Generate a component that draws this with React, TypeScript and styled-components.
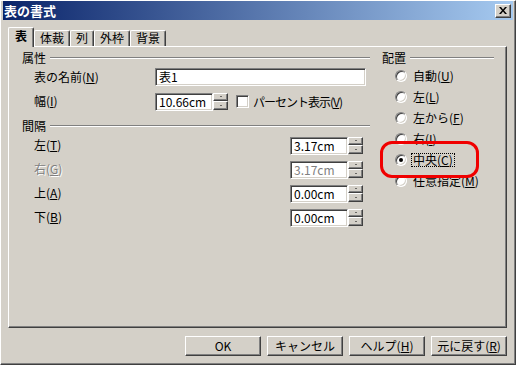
import styled, { createGlobalStyle, css } from "styled-components";

const GlobalStyle = createGlobalStyle`
  html, body {
    margin: 0;
    padding: 0;
    background: #d4d0c8;
  }
  body {
    font-family: "Noto Sans CJK JP", "DejaVu Sans", sans-serif;
    font-size: 12px;
    color: #000;
  }
`;

const raised = css`
  border: 1px solid;
  border-color: #fff #404040 #404040 #fff;
  box-shadow: inset -1px -1px #808080;
`;

const sunken = css`
  border: 1px solid;
  border-color: #808080 #fff #fff #808080;
  box-shadow: inset 1px 1px #404040, inset -1px -1px #d4d0c8;
`;

const Window = styled.div`
  position: relative;
  width: 516px;
  height: 365px;
  box-sizing: border-box;
  background: #d4d0c8;
  border: 1px solid;
  border-color: #fff #404040 #404040 #fff;
  box-shadow: inset -1px -1px #808080;
  padding: 0 2px 2px 2px;
  display: flex;
  flex-direction: column;
`;

const TitleBar = styled.div`
  height: 19px;
  display: flex;
  align-items: center;
  padding: 0 2px 0 1px;
  background: linear-gradient(to right, #0a246a, #a6caf0);
`;

const Title = styled.div`
  color: #fff;
  font-weight: bold;
  font-size: 13px;
  line-height: 15px;
`;

const CloseButton = styled.div`
  ${raised};
  margin-left: auto;
  width: 16px;
  height: 14px;
  box-sizing: border-box;
  background: #d4d0c8;
  display: flex;
  align-items: center;
  justify-content: center;
`;

const Body = styled.div`
  padding: 7px 6px 0 5px;
  display: flex;
  flex-direction: column;
`;

const TabBar = styled.div`
  height: 19px;
  display: flex;
  align-items: flex-end;
  padding-left: 2px;
`;

const Tab = styled.div<{ $active?: boolean }>`
  position: relative;
  box-sizing: border-box;
  height: 16px;
  padding: 0 5px;
  line-height: 14px;
  background: #d4d0c8;
  border-top: 1px solid #fff;
  border-left: 1px solid #fff;
  border-right: 1px solid #404040;
  box-shadow: inset -1px 0 #808080;
  border-radius: 2px 2px 0 0;
  white-space: nowrap;
  ${(p) =>
    p.$active &&
    css`
      z-index: 1;
      height: 20px;
      margin: 0 0 -1px -2px;
      padding: 1px 6px 0 6px;
      font-weight: bold;
    `}
`;

const Panel = styled.div`
  height: 282px;
  box-sizing: border-box;
  border: 1px solid;
  border-color: #fff #404040 #404040 #fff;
  box-shadow: inset -1px -1px #808080;
  padding: 4px 12px 0 13px;
  display: flex;
  gap: 12px;
`;

const Column = styled.div<{ $width: number }>`
  width: ${(p) => p.$width}px;
  display: flex;
  flex-direction: column;
`;

const Heading = styled.div<{ $gap?: number }>`
  height: 14px;
  display: flex;
  align-items: center;
  gap: 4px;
  margin-top: ${(p) => p.$gap ?? 0}px;
  line-height: 14px;
`;

const HeadingLine = styled.div`
  flex: 1;
  border-top: 1px solid #808080;
  border-bottom: 1px solid #fff;
`;

const Row = styled.div`
  height: 24px;
  display: flex;
  align-items: center;
  padding-left: 12px;
`;

const Label = styled.div<{ $width: number; $disabled?: boolean }>`
  width: ${(p) => p.$width}px;
  line-height: 14px;
  white-space: nowrap;
  ${(p) =>
    p.$disabled &&
    css`
      color: #808080;
      text-shadow: 1px 1px #fff;
    `}
`;

const TextField = styled.div<{ $width: number; $disabled?: boolean }>`
  ${sunken};
  box-sizing: border-box;
  width: ${(p) => p.$width}px;
  height: 18px;
  background: #fff;
  padding-left: 3px;
  line-height: 16px;
  color: ${(p) => (p.$disabled ? "#808080" : "#000")};
`;

const Spin = styled.div`
  display: flex;
  height: 17px;
`;

const SpinButtons = styled.div`
  width: 15px;
  display: flex;
  flex-direction: column;
`;

const SpinButton = styled.div<{ $down?: boolean }>`
  ${raised};
  flex: 1;
  box-sizing: border-box;
  background: #d4d0c8;
  display: flex;
  align-items: center;
  justify-content: center;

  &::after {
    content: "";
    width: 0;
    height: 0;
    border-left: 1px solid transparent;
    border-right: 1px solid transparent;
    ${(p) =>
      p.$down
        ? "border-top: 1px solid #000;"
        : "border-bottom: 1px solid #000;"}
  }
`;

const CheckBox = styled.div`
  ${sunken};
  box-sizing: border-box;
  width: 13px;
  height: 13px;
  margin-left: 8px;
  background: #fff;
`;

const CheckText = styled.span`
  margin-left: 4px;
  letter-spacing: -1px;
  white-space: nowrap;
`;

const RadioItem = styled.div`
  height: 21px;
  display: flex;
  align-items: center;
  gap: 5px;
  padding-left: 13px;
`;

const RadioCircle = styled.div<{ $checked?: boolean }>`
  position: relative;
  width: 12px;
  height: 12px;
  box-sizing: border-box;
  border-radius: 50%;
  background: #fff;
  border: 1px solid;
  border-color: #808080 #fff #fff #808080;
  box-shadow: inset 1px 1px #404040, inset -1px -1px #d4d0c8;

  ${(p) =>
    p.$checked &&
    css`
      &::after {
        content: "";
        position: absolute;
        left: 3px;
        top: 3px;
        width: 4px;
        height: 4px;
        border-radius: 50%;
        background: #000;
      }
    `}
`;

const RadioLabel = styled.span<{ $focus?: boolean }>`
  line-height: 12px;
  padding: 0 1px;
  white-space: nowrap;
  outline: ${(p) => (p.$focus ? "1px dotted #000" : "none")};
`;

const ButtonRow = styled.div`
  margin-top: 8px;
  display: flex;
  justify-content: flex-end;
  gap: 6px;
`;

const Button = styled.div`
  ${raised};
  box-sizing: border-box;
  width: 76px;
  height: 20px;
  background: #d4d0c8;
  display: flex;
  align-items: center;
  justify-content: center;
  line-height: 14px;
`;

const Highlight = styled.div`
  position: absolute;
  left: 379px;
  top: 140px;
  width: 99px;
  height: 37px;
  box-sizing: border-box;
  border: 3px solid #f00000;
  border-radius: 12px;
  pointer-events: none;
`;

const SpinField = ({ value, disabled }: { value: string; disabled?: boolean }) => (
  <Spin>
    <TextField $width={58} $disabled={disabled}>
      {value}
    </TextField>
    <SpinButtons>
      <SpinButton />
      <SpinButton $down />
    </SpinButtons>
  </Spin>
);

const spacing = [
  { label: "左", key: "T", value: "3.17cm" },
  { label: "右", key: "G", value: "3.17cm", disabled: true },
  { label: "上", key: "A", value: "0.00cm" },
  { label: "下", key: "B", value: "0.00cm" },
];

const alignments = [
  { label: "自動", key: "U" },
  { label: "左", key: "L" },
  { label: "左から", key: "F" },
  { label: "右", key: "I" },
  { label: "中央", key: "C", checked: true },
  { label: "任意指定", key: "M" },
];

const App = () => {
  return (
    <>
      <GlobalStyle />
      <Window>
        <TitleBar>
          <Title>表の書式</Title>
          <CloseButton>
            <svg width="8" height="7" viewBox="0 0 8 7">
              <path d="M0 0h2l2 2.5L6 0h2L5 3.5 8 7H6L4 4.5 2 7H0l3-3.5z" fill="#000" />
            </svg>
          </CloseButton>
        </TitleBar>

        <Body>
          <TabBar>
            <Tab $active>表</Tab>
            <Tab>体裁</Tab>
            <Tab>列</Tab>
            <Tab>外枠</Tab>
            <Tab>背景</Tab>
          </TabBar>

          <Panel>
            <Column $width={348}>
              <Heading>
                属性
                <HeadingLine />
              </Heading>
              <Row>
                <Label $width={121}>
                  表の名前(<u>N</u>)
                </Label>
                <TextField $width={211}>表1</TextField>
              </Row>
              <Row>
                <Label $width={121}>
                  幅(<u>I</u>)
                </Label>
                <SpinField value="10.66cm" />
                <CheckBox />
                <CheckText>
                  パーセント表示(<u>V</u>)
                </CheckText>
              </Row>

              <Heading $gap={6}>
                間隔
                <HeadingLine />
              </Heading>
              {spacing.map((s) => (
                <Row key={s.key}>
                  <Label $width={256} $disabled={s.disabled}>
                    {s.label}(<u>{s.key}</u>)
                  </Label>
                  <SpinField value={s.value} disabled={s.disabled} />
                </Row>
              ))}
            </Column>

            <Column $width={112}>
              <Heading>
                配置
                <HeadingLine />
              </Heading>
              {alignments.map((a) => (
                <RadioItem key={a.key}>
                  <RadioCircle $checked={a.checked} />
                  <RadioLabel $focus={a.checked}>
                    {a.label}(<u>{a.key}</u>)
                  </RadioLabel>
                </RadioItem>
              ))}
            </Column>
          </Panel>

          <ButtonRow>
            <Button>OK</Button>
            <Button>キャンセル</Button>
            <Button>
              ヘルプ(<u>H</u>)
            </Button>
            <Button>
              元に戻す(<u>R</u>)
            </Button>
          </ButtonRow>
        </Body>

        <Highlight />
      </Window>
    </>
  );
};

export default App;
